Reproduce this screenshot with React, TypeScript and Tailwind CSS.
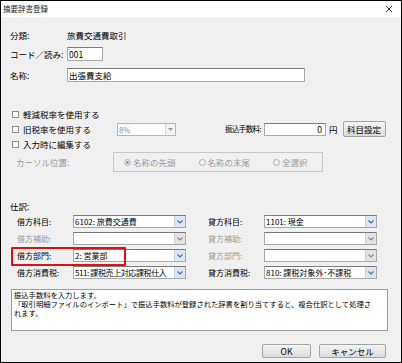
import React from "react";

type SelectProps = {
  value?: string;
  width: string;
  disabled?: boolean;
  tight?: boolean;
};

function Arrow({ disabled }: { disabled?: boolean }) {
  return (
    <div
      className={
        disabled
          ? "w-[11px] h-full flex items-center justify-center bg-[#e4e4e4] border-l border-[#d0d0d0]"
          : "w-[11px] h-full flex items-center justify-center bg-[#dce7f5] border-l border-[#c3d4ea]"
      }
    >
      <svg width="6" height="4" viewBox="0 0 6 4">
        <path
          d="M0.5 0.5 L3 3 L5.5 0.5"
          fill="none"
          stroke={disabled ? "#8a8a8a" : "#4a6aa0"}
          strokeWidth="1.2"
        />
      </svg>
    </div>
  );
}

function Select({ value, width, disabled, tight }: SelectProps) {
  return (
    <div
      className={`${width} h-[13px] flex items-stretch bg-white border border-[#a9a9a9] border-t-[#7a7a7a]`}
    >
      <div
        className={
          tight
            ? "flex-1 pl-[1px] leading-[11px] whitespace-nowrap overflow-hidden tracking-[-0.4px]"
            : "flex-1 pl-[1px] leading-[11px] whitespace-nowrap overflow-hidden"
        }
      >
        {value}
      </div>
      <Arrow disabled={disabled} />
    </div>
  );
}

function Checkbox({ label }: { label: string }) {
  return (
    <div className="flex items-center h-full whitespace-nowrap">
      <div className="ml-[2px] w-[7px] h-[7px] border border-[#8e8e8e] bg-white" />
      <span className="ml-[4px]">{label}</span>
    </div>
  );
}

function Radio({ label, checked }: { label: string; checked?: boolean }) {
  return (
    <div className="flex items-center text-[#9a9a9a] whitespace-nowrap">
      <svg width="7" height="7" viewBox="0 0 7 7">
        <circle cx="3.5" cy="3.5" r="3" fill="none" stroke="#a8a8a8" strokeWidth="0.9" />
        {checked && <circle cx="3.5" cy="3.5" r="1.4" fill="#8a8a8a" />}
      </svg>
      <span className="ml-[2px]">{label}</span>
    </div>
  );
}

function Button({ label, className }: { label: string; className: string }) {
  return (
    <div
      className={`${className} flex items-center justify-center border border-[#a3a3a3] rounded-[2px] bg-gradient-to-b from-[#f4f4f4] to-[#dcdcdc] whitespace-nowrap`}
    >
      {label}
    </div>
  );
}

export default function App() {
  return (
    <div
      className="w-[402px] h-[363px] border border-black bg-[#f0f0f0] text-[8.5px] text-black overflow-hidden flex flex-col"
      style={{ fontFamily: '"Noto Sans CJK JP", "Noto Sans", sans-serif' }}
    >
      {/* title bar */}
      <div className="h-[16px] bg-white flex items-center justify-between pl-[2px] pr-[8px]">
        <span className="text-[7.5px] text-[#222]">摘要辞書登録</span>
        <svg width="8" height="8" viewBox="0 0 8 8">
          <path d="M1 1 L7 7 M7 1 L1 7" stroke="#333" strokeWidth="1" />
        </svg>
      </div>

      <div className="pl-[9px] flex flex-col">
        {/* header rows */}
        <div className="mt-[11px] h-[14px] flex items-center">
          <span className="w-[57px]">分類:</span>
          <span>旅費交通費取引</span>
        </div>
        <div className="mt-[5px] h-[14px] flex items-center">
          <span className="w-[57px] whitespace-nowrap">コード／読み:</span>
          <div className="w-[36px] h-[14px] bg-white border border-[#a9a9a9] border-t-[#7a7a7a] leading-[12px] pl-[1px]">
            001
          </div>
        </div>
        <div className="mt-[7px] h-[14px] flex items-center">
          <span className="w-[57px]">名称:</span>
          <div className="w-[238px] h-[14px] bg-white border border-[#a9a9a9] border-t-[#7a7a7a] leading-[12px] pl-[1px]">
            出張費支給
          </div>
        </div>

        {/* options */}
        <div className="mt-[25px] h-[14px]">
          <Checkbox label="軽減税率を使用する" />
        </div>
        <div className="h-[16px] flex items-center">
          <div className="w-[107px] h-full">
            <Checkbox label="旧税率を使用する" />
          </div>
          <div className="w-[59px] h-[13px] flex items-stretch bg-white border border-[#b5b5b5]">
            <div className="flex-1 pl-[1px] leading-[11px] text-[#8a8a8a] text-[7.5px]">8%</div>
            <div className="w-[10px] flex items-center justify-center border-l border-[#d8d8d8] bg-[#f2f2f2]">
              <svg width="5" height="3" viewBox="0 0 5 3">
                <path d="M0 0 L5 0 L2.5 3 Z" fill="#9a9a9a" />
              </svg>
            </div>
          </div>
          <span className="ml-[49px] w-[39px] whitespace-nowrap text-[7.5px] tracking-[-0.6px]">振込手数料:</span>
          <div className="w-[62px] h-[13px] bg-white border border-[#a9a9a9] border-t-[#7a7a7a] flex items-center justify-end pr-[3px] leading-[11px]">
            0
          </div>
          <span className="ml-[3px]">円</span>
          <Button label="科目設定" className="ml-[5px] w-[43px] h-[16px]" />
        </div>
        <div className="h-[15px]">
          <Checkbox label="入力時に編集する" />
        </div>
        <div className="h-[20px] flex items-center">
          <span className="ml-[6px] w-[97px] text-[#9a9a9a] whitespace-nowrap">カーソル位置:</span>
          <div className="w-[210px] h-[20px] border border-[#c8c8c8] flex items-center pl-[10px] gap-[23px]">
            <Radio label="名称の先頭" checked />
            <Radio label="名称の末尾" />
            <Radio label="全選択" />
          </div>
        </div>

        {/* journal */}
        <div className="mt-[27px] h-[14px] flex items-center">
          <span>仕訳:</span>
        </div>
        <div className="mt-[2px] flex flex-col gap-[4px] pl-[7px] text-[8px] whitespace-nowrap">
          <div className="h-[13px] flex items-center">
            <span className="w-[56px]">借方科目:</span>
            <Select width="w-[113px]" value="6102: 旅費交通費" />
            <span className="ml-[22px] w-[56px]">貸方科目:</span>
            <Select width="w-[113px]" value="1101: 現金" />
          </div>
          <div className="h-[13px] flex items-center">
            <span className="w-[56px] text-[#9a9a9a]">借方補助:</span>
            <Select width="w-[113px]" disabled />
            <span className="ml-[22px] w-[56px] text-[#9a9a9a]">貸方補助:</span>
            <Select width="w-[113px]" disabled />
          </div>
          <div className="h-[13px] flex items-center relative">
            <div className="absolute left-[-6px] top-[-2px] w-[115px] h-[19px] border-[2px] border-[#dd1111] rounded-[1px]" />
            <span className="w-[56px]">借方部門:</span>
            <Select width="w-[113px]" value="2: 営業部" />
            <span className="ml-[22px] w-[56px] text-[#9a9a9a]">貸方部門:</span>
            <Select width="w-[113px]" disabled />
          </div>
          <div className="h-[13px] flex items-center">
            <span className="w-[56px]">借方消費税:</span>
            <Select width="w-[113px]" value="511: 課税売上対応課税仕入" tight />
            <span className="ml-[22px] w-[56px]">貸方消費税:</span>
            <Select width="w-[113px]" value="810: 課税対象外･不課税" />
          </div>
        </div>

        {/* description */}
        <div className="mt-[10px] ml-[1px] w-[377px] h-[42px] bg-white border border-[#9c9c9c] pl-[2px] pt-[1px] leading-[9px] whitespace-nowrap overflow-hidden text-[7.3px]">
          振込手数料を入力します。
          <br />
          「取引明細ファイルのインポート」で振込手数料が登録された辞書を割り当てすると、複合仕訳として処理さ
          <br />
          れます。
        </div>

        {/* buttons */}
        <div className="mt-[13px] flex justify-end pr-[15px] gap-[8px]">
          <Button label="OK" className="w-[49px] h-[14px]" />
          <Button label="キャンセル" className="w-[67px] h-[14px]" />
        </div>
      </div>
    </div>
  );
}
